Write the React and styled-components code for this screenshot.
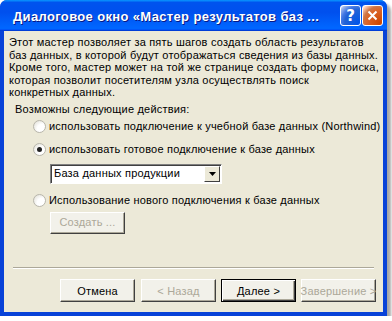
import React from "react";
import styled, { createGlobalStyle } from "styled-components";

const Global = createGlobalStyle`
    html, body {
        margin:0;
        padding:0;
        background:#ffffff;
    }
    body {
        font-family:"Liberation Sans", Arial, sans-serif;
        font-size:11px;
        letter-spacing:0.2px;
        color:#000000;
    }
`;

const Window = styled.div`
    width:387px;
    height:316px;
    box-sizing:border-box;
    display:flex;
    flex-direction:column;
    border-radius:7px 7px 0 0;
    background:#0842d8;
    box-shadow:4px 4px 3px rgba(0,0,0,0.35);
    overflow:hidden;
`;

const TitleBar = styled.div`
    height:31px;
    flex-shrink:0;
    display:flex;
    align-items:center;
    padding:0 4px 0 13px;
    box-sizing:border-box;
    background:linear-gradient(180deg,#0997ff,#0053ee 8%,#0050ee 40%,#0066ff 88%,#0066ff 93%,#005bff 95%,#003dd7 96%,#003dd7);
`;

const Title = styled.div`
    flex:1;
    color:#ffffff;
    font-family:"Liberation Sans", Arial, sans-serif;
    font-weight:bold;
    font-size:13px;
    letter-spacing:0.35px;
    white-space:nowrap;
    text-shadow:1px 1px 0 #0a1883;
    padding-top:1px;
`;

const Controls = styled.div`
    display:flex;
    gap:1px;
`;

const CtrlButton = styled.div`
    width:21px;
    height:21px;
    box-sizing:border-box;
    border:1px solid #ffffff;
    border-radius:3px;
    display:flex;
    align-items:center;
    justify-content:center;
    color:#ffffff;
    font-family:"DejaVu Sans", sans-serif;
    font-weight:bold;
    font-size:15px;
    letter-spacing:0;
    background:${p => p.close
        ? "radial-gradient(circle at 90% 90%, #cc4600 0%, #dc6527 55%, #cd7546 70%, #ffccb2 90%, #ffffff 100%)"
        : "radial-gradient(circle at 90% 90%, #0054e9 0%, #2263d5 55%, #4479e4 70%, #a3bbec 90%, #ffffff 100%)"};
`;

const Body = styled.div`
    flex:1;
    margin:0 4px 4px 4px;
    background:#ece9d8;
    display:flex;
    flex-direction:column;
    padding:5px 5px 0 5px;
`;

const Intro = styled.p`
    margin:0;
    line-height:12.5px;
    white-space:nowrap;
`;

const Section = styled.div`
    margin-top:4px;
    padding-left:6px;
    display:flex;
    flex-direction:column;
    line-height:13px;
`;

const Options = styled.div`
    display:flex;
    flex-direction:column;
    padding-left:18px;
    margin-top:4px;
`;

const RadioRow = styled.label`
    display:flex;
    align-items:center;
    gap:3px;
    height:13px;
    white-space:nowrap;
    margin-bottom:${p => p.gap || 10}px;
`;

const RadioDot = styled.span`
    width:13px;
    height:13px;
    flex-shrink:0;
    box-sizing:border-box;
    border-radius:50%;
    border:1px solid #b8b6ac;
    background:radial-gradient(circle at 70% 70%, #ffffff 40%, #dcdad0 100%);
    display:flex;
    align-items:center;
    justify-content:center;
    &::after{
        content:"";
        width:5px;
        height:5px;
        border-radius:50%;
        background:${p => p.checked ? "#222222" : "transparent"};
    }
`;

const Nested = styled.div`
    padding-left:17px;
    margin-bottom:${p => p.gap || 0}px;
`;

const Select = styled.div`
    width:172px;
    height:20px;
    box-sizing:border-box;
    border:1px solid #7f7f7f;
    border-right-color:#ffffff;
    border-bottom-color:#ffffff;
    background:#ffffff;
    display:flex;
    align-items:center;
    padding-left:3px;
    box-shadow:inset 1px 1px 0 #404040;
`;

const SelectText = styled.span`
    flex:1;
`;

const ArrowBox = styled.span`
    width:16px;
    height:16px;
    box-sizing:border-box;
    margin-right:1px;
    background:#ece9d8;
    border:1px solid #ffffff;
    border-right-color:#404040;
    border-bottom-color:#404040;
    display:flex;
    align-items:center;
    justify-content:center;
`;

const Button = styled.div`
    width:75px;
    height:${p => p.small ? 22 : 23}px;
    box-sizing:border-box;
    display:flex;
    align-items:center;
    justify-content:center;
    white-space:nowrap;
    background:#f2f1ea;
    border:1px solid #ffffff;
    border-right-color:#404040;
    border-bottom-color:#404040;
    box-shadow:inset -1px -1px 0 #aca899;
    color:${p => p.disabled ? "#aca899" : "#000000"};
    ${p => p.primary && `
        border:1px solid #000000;
        box-shadow:inset 1px 1px 0 #ffffff, inset -1px -1px 0 #404040, inset -2px -2px 0 #aca899;
    `}
`;

const Spacer = styled.div`
    flex:1;
`;

const Divider = styled.div`
    height:0;
    border-top:1px solid #aca899;
    border-bottom:1px solid #ffffff;
    margin:0 4px;
`;

const Footer = styled.div`
    display:flex;
    justify-content:flex-end;
    gap:5px;
    padding:10px 2px 10px 0;
`;

const FirstButton = styled(Button)`
    margin-right:1px;
`;

export default function App() {
    return (
        <>
            <Global />
            <Window>
                <TitleBar>
                    <Title>Диалоговое окно «Мастер результатов баз ...</Title>
                    <Controls>
                        <CtrlButton>?</CtrlButton>
                        <CtrlButton close>
                            <svg width="11" height="11" viewBox="0 0 11 11">
                                <path d="M1.5 1.5 L9.5 9.5 M9.5 1.5 L1.5 9.5" stroke="#ffffff" strokeWidth="2" />
                            </svg>
                        </CtrlButton>
                    </Controls>
                </TitleBar>
                <Body>
                    <Intro>
                        Этот мастер позволяет за пять шагов создать область результатов<br />
                        баз данных, в которой будут отображаться сведения из базы данных.<br />
                        Кроме того, мастер может на той же странице создать форму поиска,<br />
                        которая позволит посетителям узла осуществлять поиск<br />
                        конкретных данных.
                    </Intro>
                    <Section>
                        <span>Возможны следующие действия:</span>
                        <Options>
                            <RadioRow>
                                <RadioDot />
                                использовать подключение к учебной базе данных (Northwind)
                            </RadioRow>
                            <RadioRow gap={8}>
                                <RadioDot checked />
                                использовать готовое подключение к базе данных
                            </RadioRow>
                            <Nested gap={10}>
                                <Select>
                                    <SelectText>База данных продукции</SelectText>
                                    <ArrowBox>
                                        <svg width="7" height="4" viewBox="0 0 7 4">
                                            <path d="M0 0 H7 L3.5 4 Z" fill="#000000" />
                                        </svg>
                                    </ArrowBox>
                                </Select>
                            </Nested>
                            <RadioRow gap={5}>
                                <RadioDot />
                                Использование нового подключения к базе данных
                            </RadioRow>
                            <Nested>
                                <Button small disabled>Создать ...</Button>
                            </Nested>
                        </Options>
                    </Section>
                    <Spacer />
                    <Divider />
                    <Footer>
                        <FirstButton>Отмена</FirstButton>
                        <Button disabled>&lt; Назад</Button>
                        <Button primary>Далее &gt;</Button>
                        <Button disabled>Завершение &gt;</Button>
                    </Footer>
                </Body>
            </Window>
        </>
    );
}
